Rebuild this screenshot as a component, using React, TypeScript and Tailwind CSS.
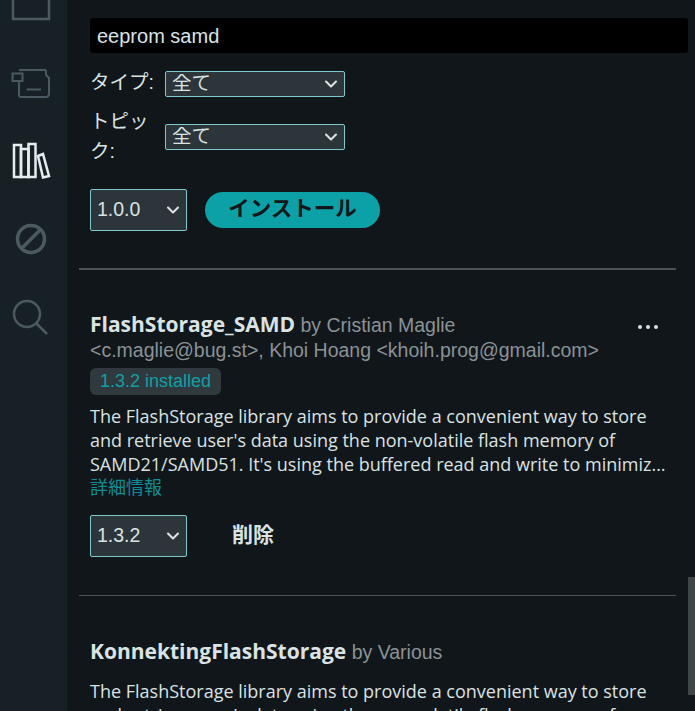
import { ChevronDown } from 'lucide-react';

const ui = 'font-["Liberation_Sans","Noto_Sans_CJK_JP",sans-serif]';

function BoardIcon() {
  return (
    <svg width="44" height="40" viewBox="0 0 44 40" fill="none" stroke="#4b5a61" strokeWidth="2">
      <path d="M10 7 H36 Q37 7 37 9 V12 L40 15 V31 Q40 34 37 34 H12 Q10 34 10 32 V18" />
      <path d="M3.500 10.500 H13.500 V18 H3.500 Z" />
      <path d="M17.500 26.500 H32" />
    </svg>
  );
}

function BooksIcon() {
  return (
    <svg width="44" height="40" viewBox="0 0 44 40" fill="none" stroke="#e6edf0" strokeWidth="2.500">
      <path d="M5 4 H12 V36 H5 Z" />
      <path d="M12 8 H19.500 V36 H12 Z" />
      <path d="M19.500 3 H26.500 V36 H19.500 Z" />
      <path d="M29 15 L34 13 L40 35 L34 36.500 Z" />
    </svg>
  );
}

function BanIcon() {
  return (
    <svg width="44" height="40" viewBox="0 0 44 40" fill="none" stroke="#4b5a61" strokeWidth="3.500">
      <circle cx="22" cy="20" r="13.500" />
      <path d="M13 29 L31 11" />
    </svg>
  );
}

function SearchIcon() {
  return (
    <svg width="44" height="40" viewBox="0 0 44 40" fill="none" stroke="#4b5a61" strokeWidth="2.500">
      <circle cx="18" cy="17" r="13" />
      <path d="M27.500 26.500 L38 37" />
    </svg>
  );
}

function Sidebar() {
  return (
    <div className="w-[67px] shrink-0 bg-[#172024] pr-[5px] overflow-hidden">
      <div className="-mt-[34px] flex flex-col items-center">
        <div className="h-[78px] flex items-center justify-center">
          <svg width="44" height="40" viewBox="0 0 44 40" fill="none" stroke="#4b5a61" strokeWidth="2.500">
            <path d="M4 4 H40 V34 H4 Z" />
          </svg>
        </div>
        <div className="h-[78px] flex items-center justify-center"><BoardIcon /></div>
        <div className="h-[78px] flex items-center justify-center"><BooksIcon /></div>
        <div className="h-[78px] flex items-center justify-center"><BanIcon /></div>
        <div className="h-[78px] flex items-center justify-center"><SearchIcon /></div>
      </div>
    </div>
  );
}

function Dropdown({ value, className }: { value: string; className: string }) {
  return (
    <div className={`relative shrink-0 bg-[#2c353a] border border-[#7ccacb] rounded-[2px] ${className}`}>
      <select
        defaultValue={value}
        className="appearance-none w-full h-full bg-transparent pl-[6px] text-[#dae3e3] text-[19.500px] leading-none outline-none"
      >
        <option className="bg-[#2c353a]">{value}</option>
      </select>
      <ChevronDown className="absolute right-[3px] top-1/2 -translate-y-1/2 w-[20px] h-[20px] text-[#dae3e3] pointer-events-none" strokeWidth={2.500} />
    </div>
  );
}

export default function App() {
  return (
    <div className={`relative h-[711px] w-[695px] overflow-hidden flex bg-[#101619] ${ui}`}>
      <Sidebar />
      <main className="flex-1 min-w-0 pl-[12px] pr-[19px]">
        <div className="pl-[11px] pt-[18px] -mr-[12px]">
          <div className="h-[35px] bg-black rounded-[3px] flex items-center pl-[7px] text-[20px] text-[#dae3e3]">
            eeprom samd
          </div>
          <div className="mt-[18px] flex items-center h-[26px]">
            <span className="w-[75px] text-[19.500px] -mt-[2px] text-[#dae3e3]">タイプ:</span>
            <Dropdown value="全て" className="w-[180px] h-[26px]" />
          </div>
          <div className="mt-[11px] flex items-center">
            <span className="w-[75px] text-[19.500px] leading-[30px] -mt-[2px] text-[#dae3e3] pr-[8px]">トピック:</span>
            <Dropdown value="全て" className="w-[180px] h-[26px]" />
          </div>
          <div className="mt-[23px] flex items-center">
            <Dropdown value="1.0.0" className="w-[97px] h-[42px]" />
            <button className="ml-[18px] w-[175px] h-[36px] rounded-full bg-[#0ca1a6] text-[#101619] text-[21.500px] font-bold leading-none">
              インストール
            </button>
          </div>
        </div>

        <div className="mt-[37px] h-[2px] bg-[#4a5357]" />

        <section className="pl-[11px] pt-[42px] relative">
          <div className="text-[19.500px] leading-[25px] text-[#8b9296]">
            <span className={`font-["Open_Sans"] font-bold text-[21px] text-[#dae3e3]`}>FlashStorage_SAMD</span> by Cristian Maglie<br />
            &lt;c.maglie@bug.st&gt;, Khoi Hoang &lt;khoih.prog@gmail.com&gt;
          </div>
          <div className="absolute right-[18px] top-[55px] flex gap-[4px]">
            <span className="w-[4px] h-[4px] rounded-full bg-[#dae3e3]" />
            <span className="w-[4px] h-[4px] rounded-full bg-[#dae3e3]" />
            <span className="w-[4px] h-[4px] rounded-full bg-[#dae3e3]" />
          </div>
          <div className="mt-[5px] w-fit h-[27px] rounded-[6px] bg-[#30393d] px-[10px] flex items-center text-[18px] text-[#0ca1a6]">
            1.3.2 installed
          </div>
          <p className={`mt-[9px] font-["Open_Sans"] text-[18px] leading-[24px] text-[#dae3e3] w-[576px] line-clamp-3`}>
            The FlashStorage library aims to provide a convenient way to store and retrieve user's data using the non-volatile flash memory of SAMD21/SAMD51. It's using the buffered read and write to minimize the access to Flash.
          </p>
          <a className="block text-[18px] leading-[24px] text-[#0a8f94]">詳細情報</a>
          <div className="mt-[15px] flex items-center">
            <Dropdown value="1.3.2" className="w-[97px] h-[42px]" />
            <button className="ml-[20px] w-[92px] h-[36px] pb-[3px] text-[#dae3e3] text-[21px] font-bold leading-none">
              削除
            </button>
          </div>
        </section>

        <div className="mt-[38px] h-px bg-[#4a5357]" />

        <section className="pl-[11px] pt-[43px]">
          <div className="text-[19.500px] leading-[25px] text-[#8b9296]">
            <span className={`font-["Open_Sans"] font-bold text-[21px] text-[#dae3e3]`}>KonnektingFlashStorage</span> by Various
          </div>
          <p className={`mt-[14px] font-["Open_Sans"] text-[18px] leading-[24px] text-[#dae3e3] w-[576px]`}>
            The FlashStorage library aims to provide a convenient way to store and retrieve user's data using the non-volatile flash memory of
          </p>
        </section>
      </main>
      <div className="absolute right-0 top-[577px] w-[7px] h-[118px] bg-[#3f4648]" />
    </div>
  );
}
